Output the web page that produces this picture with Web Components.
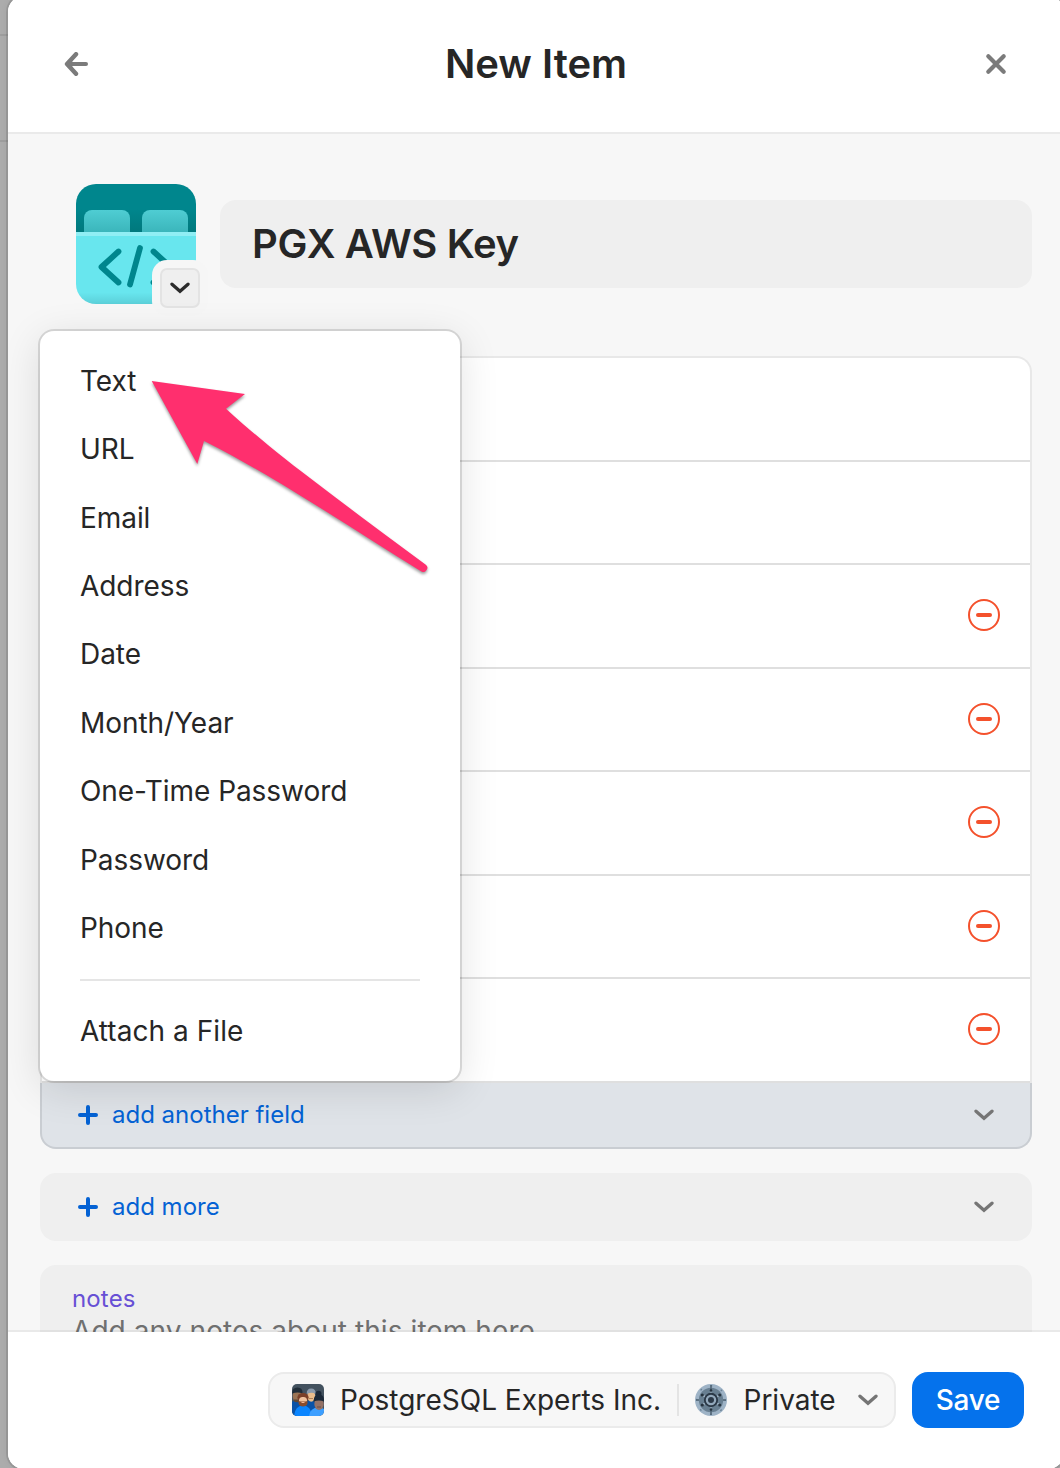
<!DOCTYPE html>
<html lang="en">
<head>
<meta charset="utf-8">
<title>New Item</title>
<style>
html,body{margin:0;height:100%;overflow:hidden}
body{background:#ababab;font-family:Inter,"Liberation Sans",sans-serif;color:#262626}
</style>
</head>
<body>
<item-dialog></item-dialog>
<script>
const define=(name,html)=>customElements.define(name,class extends HTMLElement{
  constructor(){super();const t=document.createElement('template');t.innerHTML=html;this.attachShadow({mode:'open'}).append(t.content.cloneNode(true));}
});

define('chevron-icon',`<style>:host{display:block;width:20px;height:12px;color:#757575}svg{display:block}</style>
<svg width="20" height="12" viewBox="0 0 20 12"><path d="M2 2.200 10 9.200 18 2.200" fill="none" stroke="currentColor" stroke-width="3.300" stroke-linecap="round" stroke-linejoin="miter"/></svg>`);

define('plus-icon',`<style>:host{display:block;width:20px;height:20px}svg{display:block}</style>
<svg width="20" height="20" viewBox="0 0 20 20"><path d="M10 2v16M2 10h16" fill="none" stroke="currentColor" stroke-width="4" stroke-linecap="round"/></svg>`);

define('remove-icon',`<style>:host{display:block;width:32px;height:32px}svg{display:block}</style>
<svg width="32" height="32" viewBox="0 0 32 32" fill="none" stroke="#f4512c"><circle cx="16" cy="16" r="15" stroke-width="2"/><path d="M10 16h12" stroke-width="4" stroke-linecap="round"/></svg>`);

define('dialog-header',`<style>
:host{display:flex;align-items:center;justify-content:space-between;height:136px;padding:0 56px;box-sizing:content-box;background:#fff;border-bottom:2px solid #eaeaea}
svg{display:block}h1{margin:0;font-size:40px;line-height:48px;font-weight:600}</style>
<svg width="24" height="24" viewBox="0 0 24 24" fill="none" stroke="#7b7b7b" stroke-linecap="round" stroke-linejoin="round"><path d="M12 2.200 3 12l9 9.800" stroke-width="4.400"/><path d="M4 12h18" stroke-width="4"/><path d="M7.500 8.500 4.500 12l3 3.500Z" fill="#7b7b7b" stroke-width="1"/></svg>
<h1><slot></slot></h1>
<svg width="24" height="24" viewBox="0 0 24 24" fill="none" stroke="#7b7b7b" stroke-width="4.200" stroke-linecap="round"><path d="M4.300 4.300l15.400 15.400M19.700 4.300 4.300 19.700"/></svg>`);

define('item-tile',`<style>
:host{display:block;position:relative;width:120px;height:120px}svg{display:block}
.pick{position:absolute;left:84px;top:84px;width:40px;height:40px;box-sizing:border-box;border:2px solid #e3e3e3;border-radius:7px;background:#efefef;box-shadow:0 0 0 8px #f6f6f6;display:flex;align-items:center;justify-content:center}
.pick chevron-icon{color:#2b2b2b}</style>
<svg width="120" height="120" viewBox="0 0 120 120">
<defs><linearGradient id="t" x2="0" y2="1"><stop offset=".5" stop-color="#00868d"/><stop offset="1" stop-color="#00777b"/></linearGradient>
<linearGradient id="k" x2="0" y2="1"><stop stop-color="#4fcdd3"/><stop offset="1" stop-color="#30a9ae"/></linearGradient>
<linearGradient id="b" x2="0" y2="1"><stop offset=".84" stop-color="#68e6ee"/><stop offset="1" stop-color="#5bcfd8"/></linearGradient>
<clipPath id="c"><rect width="120" height="120" rx="20"/></clipPath></defs>
<g clip-path="url(#c)"><rect width="120" height="50" fill="url(#t)"/>
<rect x="8" y="26" width="46" height="34" rx="8" fill="url(#k)"/><rect x="66" y="26" width="46" height="34" rx="8" fill="url(#k)"/>
<rect y="48" width="120" height="72" fill="url(#b)"/><rect y="48" width="120" height="4" fill="#90eef4"/></g>
<path d="M42.500 67.500 25.500 83l17 15.500M64 64 54 100.500M77.500 67.500 94.500 83l-17 15.500" fill="none" stroke="#00868d" stroke-width="5.800" stroke-linecap="round" stroke-linejoin="round"/></svg>
<div class="pick"><chevron-icon></chevron-icon></div>`);

define('title-field',`<style>:host{display:flex;align-items:center;height:88px;padding:0 32px;border-radius:16px;background:#efefef;font-size:40px;line-height:48px;font-weight:600;letter-spacing:-.33px}</style><slot></slot>`);

define('field-row',`<style>:host{display:flex;box-sizing:border-box;height:103.5px;padding:0 30px 2px;border-bottom:2px solid #dfdfdf;align-items:center;justify-content:flex-end}</style><slot></slot>`);

define('field-card',`<style>
:host{display:block}.rows{border:2px solid #e8e8e8;border-bottom:0;border-radius:16px 16px 0 0;background:#fff}
</style><div class="rows"><slot></slot></div><slot name="action"></slot>`);

define('add-row',`<style>
:host{display:flex;align-items:center;box-sizing:border-box;height:68px;padding:0 38px;border-radius:16px;background:#efefef;color:#0462d4;font-size:24px;line-height:30px}
:host([active]){height:66px;padding:0 36px;border:2px solid #c9cdd2;border-top:0;border-radius:0 0 16px 16px;background:#dfe3e8}
.label{flex:1;margin-left:14px}</style>
<plus-icon></plus-icon><span class="label"><slot></slot></span><chevron-icon></chevron-icon>`);

define('notes-field',`<style>
:host{display:block;height:200px;flex:none;padding:19px 32px 0;border-radius:16px;background:#efefef}
.label{font-size:24px;line-height:30px;color:#6750d5;letter-spacing:.15px}.hint{font-size:28px;line-height:34px;color:#707070;letter-spacing:.08px}</style>
<div class="label"><slot name="label"></slot></div><div class="hint"><slot></slot></div>`);

define('menu-item',`<style>:host{display:flex;align-items:center;height:68.4px;padding:0 40px;font-size:28px;line-height:34px;letter-spacing:-.06px}:host(:last-child){letter-spacing:.05px}</style><slot></slot>`);
define('menu-divider',`<style>:host{display:block;height:2px;margin:16.300px 40px 16px;background:#e5e5e5}</style>`);
define('field-menu',`<style>
:host{display:block;box-sizing:border-box;width:420px;height:750px;padding:15.700px 0;background:#fff;border-radius:14px;box-shadow:0 0 0 2px rgba(0,0,0,.12),0 8px 40px rgba(0,0,0,.12)}</style><slot></slot>`);

define('pointer-arrow',`<style>:host{display:block;width:290px;height:205px}svg{display:block;overflow:visible;filter:drop-shadow(0 2px 1.5px rgba(0,0,0,.4))}</style>
<svg width="290" height="205" viewBox="145 375 290 205"><path fill="#ff2f6e" d="M151.700 381 245 394 226 408.700C247 428 277 453 310 478 348 507 388 537 425.500 564.500A4 4 0 0 1 421 571.200C388 551 356 530 322 509 282 484 242 460 204 441L197.300 464Z"/></svg>`);

define('account-avatar',`<style>:host{display:block;width:32px;height:32px}svg{display:block}</style>
<svg width="32" height="32" viewBox="0 0 32 32"><defs><clipPath id="a"><rect width="32" height="32" rx="5"/></clipPath></defs><g clip-path="url(#a)">
<rect width="32" height="32" fill="#43525f"/>
<path d="M-2 19q7-5 13 0v13H-2zM13 18q7-4 12 2v12H13z" fill="#0a52a7"/>
<ellipse cx="5" cy="12" rx="4.400" ry="6" fill="#9b7454"/><path d="M0 9.500Q0 3.500 5.500 3.500T10.500 9.500Q6 7.500 0 9.500Z" fill="#202d38"/><path d="M2 15.500h6v2q-3 1.500-6 0Z" fill="#604633"/>
<ellipse cx="19.200" cy="12" rx="4" ry="5.800" fill="#eabd8c"/><path d="M14.700 10Q14.500 4.500 19.200 4.500T23.700 10Q20 7.500 14.700 10Z" fill="#8c9bac"/><path d="M17 14.500h4" stroke="#ad8057"/>
<path d="M2 32Q3 21.500 11 21.500T20 32Z" fill="#0a85ff"/>
<ellipse cx="11" cy="13.500" rx="5.600" ry="4.500" fill="#7b4028"/><rect x="7" y="13" width="8" height="8.500" rx="3.500" fill="#f0c19c"/><path d="M6.500 17q4.500 1 9 0v2.500q-1 3-4.500 3t-4.500-3Z" fill="#8a4c2d"/><path d="M9.500 18.500h3" stroke="#eeb596"/>
<path d="M17 32Q18 23.500 26.500 23.500T35 32Z" fill="#3d9fff"/>
<ellipse cx="27" cy="20" rx="4.700" ry="6" fill="#947267"/><circle cx="26.500" cy="9.800" r="3" fill="#1b2938"/><path d="M21.500 17.500Q21.500 10.500 27 10.500T32 17.500Q27 15.500 21.500 17.500Z" fill="#1b2938"/><path d="M25 23h4" stroke="#6d4c45"/>
</g></svg>`);

define('vault-icon',`<style>:host{display:block;width:32px;height:32px}svg{display:block}</style>
<svg width="32" height="32" viewBox="0 0 32 32" fill="none"><circle cx="16" cy="16" r="16" fill="#9eb3c6"/><circle cx="16" cy="16" r="14.200" stroke="#6b8295" stroke-width="1.400" stroke-dasharray="1.800 9.350" stroke-dashoffset=".9"/><circle cx="16" cy="16" r="12.200" fill="#687f91"/>
<path d="M16 1v8M16 23v8M1 16h3M28 16h3" stroke="#4d6172" stroke-width="1.500"/>
<path d="M16 6v20M7 11l18 10M25 11 7 21" stroke="#a7bccd" stroke-width="1.500"/>
<g fill="#26333f"><circle cx="16" cy="6.500" r="1.300"/><circle cx="16" cy="25.500" r="1.300"/><circle cx="7.300" cy="11" r="1.600"/><circle cx="24.700" cy="11" r="1.600"/><circle cx="7.300" cy="21" r="1.600"/><circle cx="24.700" cy="21" r="1.600"/></g>
<circle cx="16" cy="16" r="6.200" fill="#93a9bc" stroke="#2b3947" stroke-width="1.900"/><circle cx="16" cy="16" r="3" fill="#2b3947"/></svg>`);

define('vault-picker',`<style>
:host{display:flex;align-items:center;box-sizing:border-box;width:628px;height:56px;border:2px solid #ebebeb;border-radius:16px;background:#f7f7f7;padding:0 16px 0 22px;font-size:28px;line-height:34px;white-space:nowrap}
.acct{margin-left:16px;width:321px}i{width:2px;height:32px;background:#e4e4e4;margin:0 16px}.name{margin-left:16.500px;flex:1}</style>
<account-avatar></account-avatar><span class="acct"><slot name="account"></slot></span><i></i><vault-icon></vault-icon><span class="name"><slot></slot></span><chevron-icon></chevron-icon>`);

define('save-button',`<style>:host{display:flex;align-items:center;justify-content:center;width:112px;height:56px;border-radius:16px;background:#0572ec;color:#fff;font-size:28px;font-weight:500;line-height:34px;letter-spacing:-.3px}</style><slot></slot>`);

define('dialog-footer',`<style>:host{display:flex;position:relative;box-sizing:border-box;height:139px;margin-top:-2px;border-top:2px solid rgba(0,0,0,.055);background:#fff;background-clip:padding-box;padding:40px 40px 0;justify-content:flex-end;gap:16px}</style><slot></slot>`);

define('item-dialog',`<style>
:host{display:flow-root;height:1468px;overflow:hidden;background:linear-gradient(#9e9e9e,#9e9e9e) 0 34px/8px 2px no-repeat,linear-gradient(#9e9e9e,#9e9e9e) 0 140px/8px 2px no-repeat,#acacac}
.frame{width:1056px;margin:-4px 0 0 8px;height:1473px;border-radius:16px;box-shadow:0 0 0 2px rgba(0,0,0,.1),0 0 10px rgba(0,0,0,.06)}
.dialog{height:1473px;border-radius:16px;overflow:hidden;background:#fff;display:flex;flex-direction:column}
dialog-header{flex:none}
.body{position:relative;height:1198px;flex:none;box-sizing:border-box;padding:50px 32px 0;background:#f7f7f7;overflow:hidden;display:flex;flex-direction:column}
.top{display:flex;align-items:center;gap:24px;padding-left:36px;height:120px;flex:none}
title-field{flex:1}
field-card{margin-top:52.400px;flex:none}
add-row.more{margin:24.100px 0 24px;flex:none}
field-menu{position:absolute;left:32px;top:197px}
pointer-arrow{position:absolute;left:137px;top:241px}
</style>
<div class="frame"><div class="dialog">
<dialog-header>New Item</dialog-header>
<div class="body">
<div class="top"><item-tile></item-tile><title-field>PGX AWS Key</title-field></div>
<field-card>
<field-row></field-row><field-row></field-row>
<field-row><remove-icon></remove-icon></field-row><field-row><remove-icon></remove-icon></field-row><field-row><remove-icon></remove-icon></field-row><field-row><remove-icon></remove-icon></field-row><field-row><remove-icon></remove-icon></field-row>
<add-row slot="action" active>add another field</add-row>
</field-card>
<add-row class="more">add more</add-row>
<notes-field><span slot="label">notes</span>Add any notes about this item here.</notes-field>
<field-menu><menu-item>Text</menu-item><menu-item>URL</menu-item><menu-item>Email</menu-item><menu-item>Address</menu-item><menu-item>Date</menu-item><menu-item>Month/Year</menu-item><menu-item>One-Time Password</menu-item><menu-item>Password</menu-item><menu-item>Phone</menu-item><menu-divider></menu-divider><menu-item>Attach a File</menu-item></field-menu>
<pointer-arrow></pointer-arrow>
</div>
<dialog-footer><vault-picker><span slot="account">PostgreSQL Experts Inc.</span>Private</vault-picker><save-button>Save</save-button></dialog-footer>
</div></div>`);
</script>
</body>
</html>
